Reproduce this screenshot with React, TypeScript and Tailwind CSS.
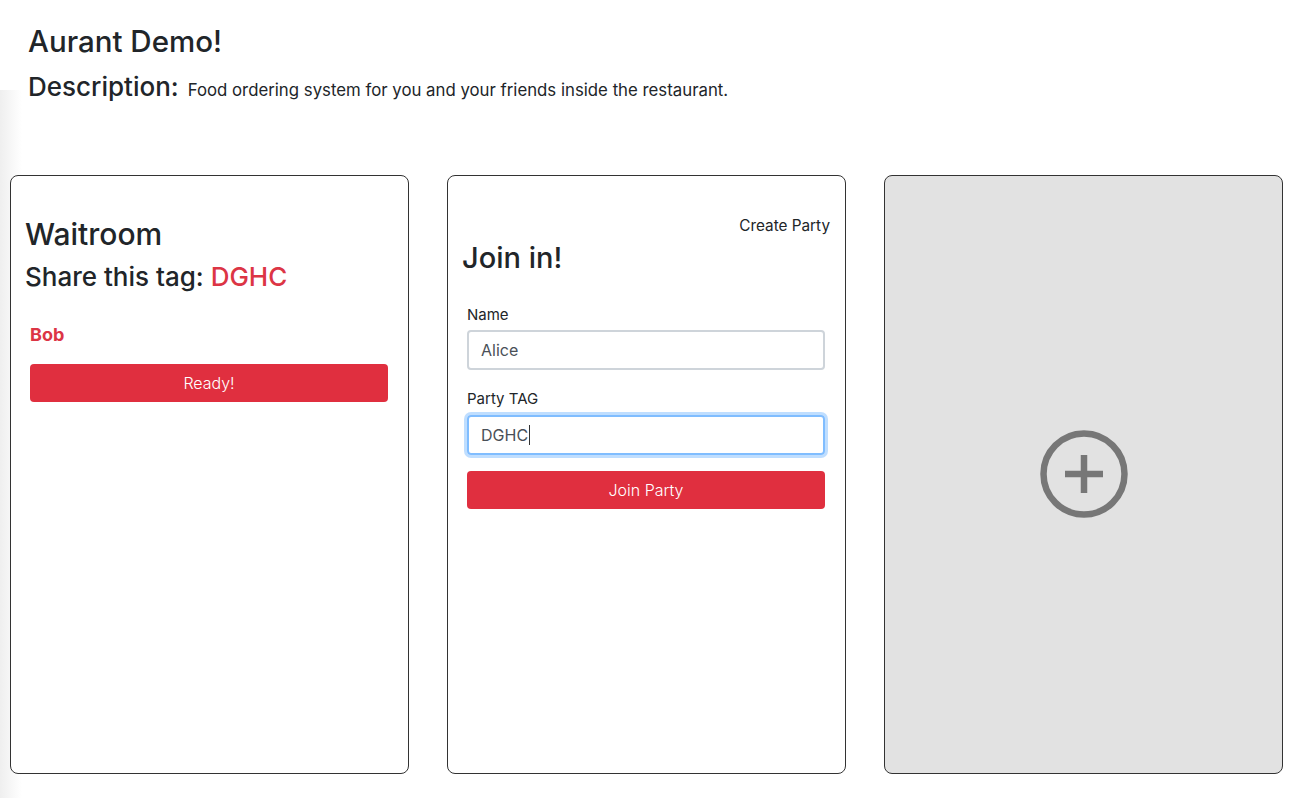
import React from "react";

const font = { fontFamily: "Inter, 'Noto Sans', 'Liberation Sans', sans-serif" };

export default function App() {
  return (
    <div className="relative min-h-[798px] w-[1300px] bg-white text-[#212529] overflow-hidden" style={font}>
      <div className="pointer-events-none absolute left-0 top-[90px] h-[708px] w-[22px] bg-gradient-to-r from-[#efefef] to-transparent" />
      <div className="relative">
        <div className="pl-[28px] pt-[24px]">
          <h1 className="text-[29.5px] leading-[1.2] font-medium">Aurant Demo!</h1>
          <div className="mt-[12px] flex items-baseline gap-[9px]">
            <h2 className="text-[26px] leading-[1.2] font-medium">Description:</h2>
            <p className="text-[16.8px]">Food ordering system for you and your friends inside the restaurant.</p>
          </div>
        </div>

        <div className="mt-[71px] flex gap-[38px] pl-[10px]">
          {/* Waitroom card */}
          <div className="h-[599px] w-[399px] rounded-[8px] border border-[#333] bg-white pl-[14px] pr-[15px] pt-[40px]">
            <h3 className="text-[30px] leading-[1.2] font-medium">Waitroom</h3>
            <h4 className="mt-[9px] text-[26px] leading-[1.2] font-medium">
              Share this tag: <span className="text-[#dc3545]">DGHC</span>
            </h4>
            <div className="px-[5px]">
              <div className="mt-[29px] text-[18px] font-bold text-[#dc3545]">Bob</div>
              <button className="mt-[16px] h-[38px] w-full rounded-[4px] bg-[#e02f3f] text-[16px] font-light text-white">
                Ready!
              </button>
            </div>
          </div>

          {/* Join card */}
          <div className="h-[599px] w-[399px] rounded-[8px] border border-[#333] bg-white pl-[14px] pr-[15px] pt-[38px]">
            <div className="text-right text-[15.3px] leading-[24px]">Create Party</div>
            <h2 className="mt-[3px] text-[29px] leading-[1.2] font-medium">Join in!</h2>
            <div className="mt-[28px] px-[5px]">
              <label className="block text-[15px] leading-[24px]">Name</label>
              <div className="mt-[3px] flex h-[40px] items-center rounded-[4px] border-2 border-[#ced4da] px-[12px] text-[16px] text-[#495057]">
                Alice
              </div>
              <label className="mt-[17px] block text-[15px] leading-[24px]">Party TAG</label>
              <div className="mt-[4px] flex h-[40px] items-center rounded-[4px] border-2 border-[#80bdff] px-[12px] text-[16px] text-[#495057] shadow-[0_0_0_3px_rgba(0,123,255,0.25)]">
                DGHC<span className="ml-px inline-block h-[20px] w-px bg-[#333]" />
              </div>
              <button className="mt-[16px] h-[38px] w-full rounded-[4px] bg-[#e02f3f] text-[16px] font-light text-white">
                Join Party
              </button>
            </div>
          </div>

          {/* Add card */}
          <div className="flex h-[599px] w-[399px] items-center justify-center rounded-[8px] border border-[#333] bg-[#e2e2e2]">
            <svg width="90" height="90" viewBox="0 0 90 90" fill="none" stroke="#777" strokeWidth="6.5">
              <circle cx="45" cy="45" r="40.5" />
              <line x1="45" y1="26" x2="45" y2="64" />
              <line x1="26" y1="45" x2="64" y2="45" />
            </svg>
          </div>
        </div>
      </div>
    </div>
  );
}
